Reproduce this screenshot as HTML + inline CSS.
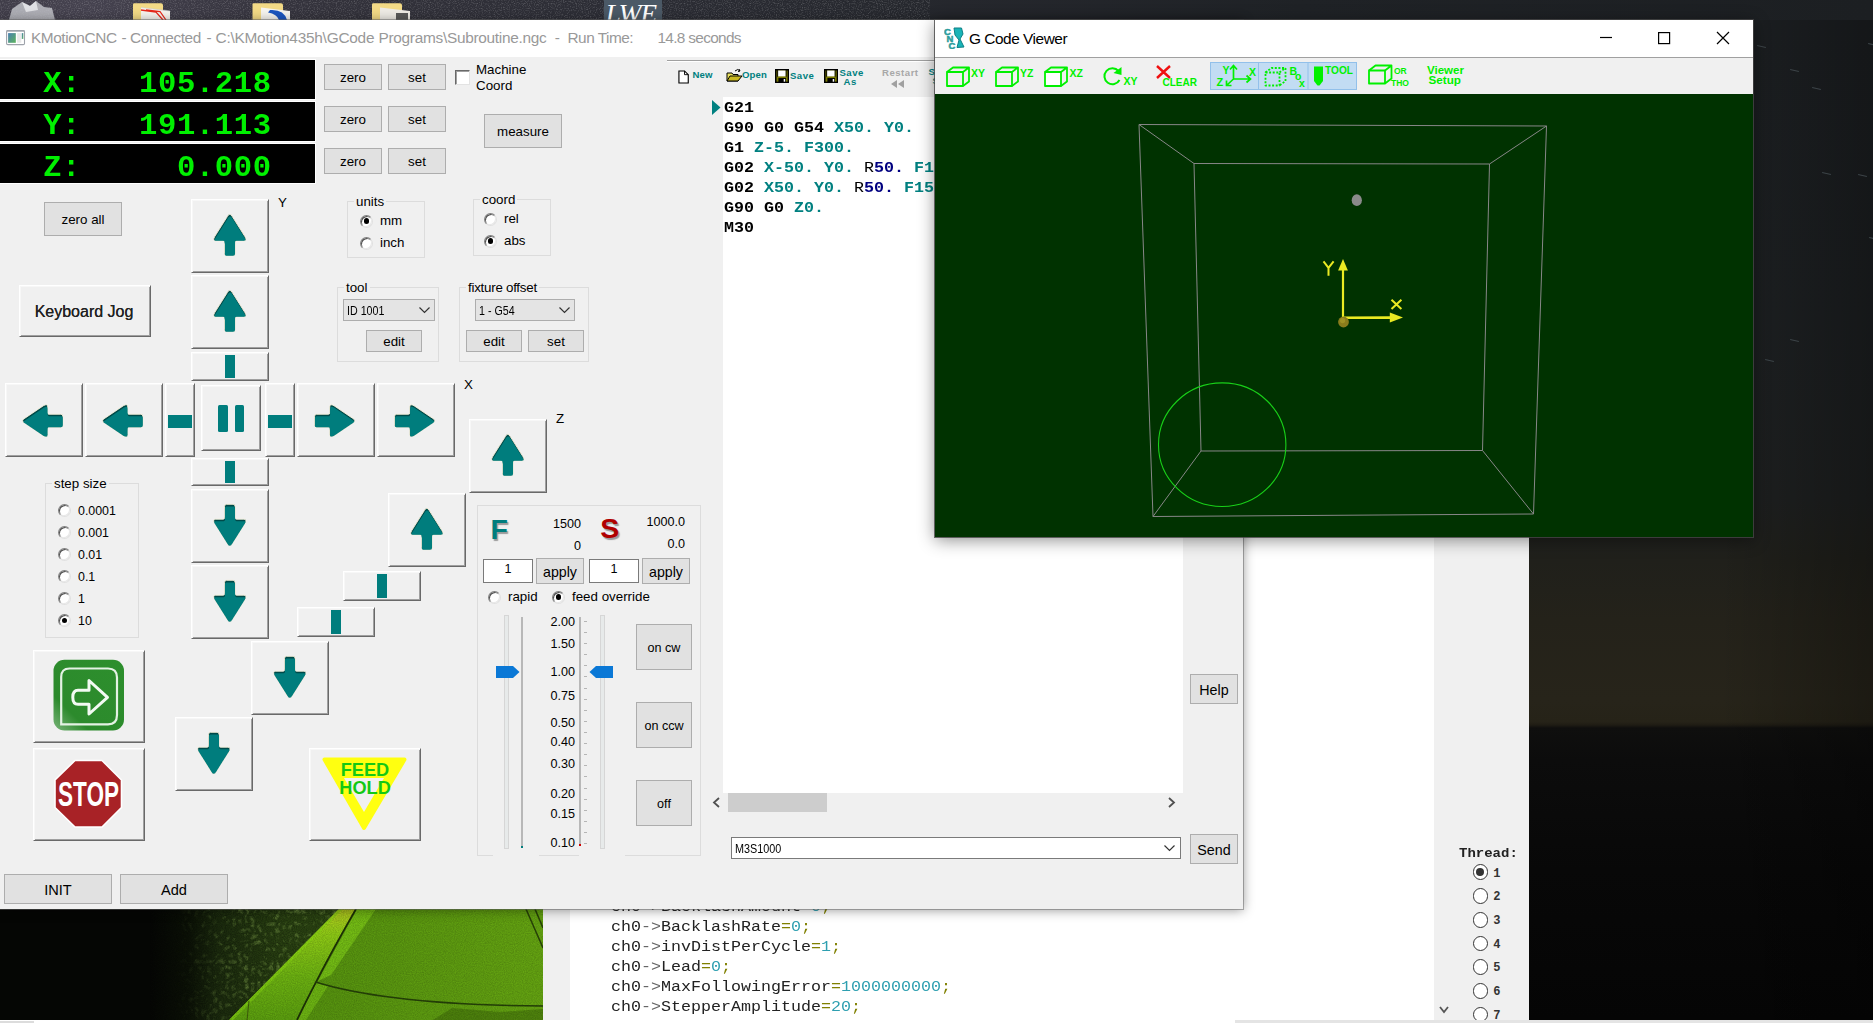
<!DOCTYPE html>
<html lang="en"><head><meta charset="utf-8"><title>KMotionCNC</title>
<style>
html,body{margin:0;padding:0}
body{width:1873px;height:1023px;overflow:hidden;position:relative;background:#15161a;font-family:"Liberation Sans",sans-serif;font-size:13.33px;color:#000}
.a{position:absolute}
.t{position:absolute;white-space:pre;line-height:1}
.btn{position:absolute;box-sizing:border-box;background:#e1e1e1;border:1px solid #adadad;text-align:center;white-space:pre}
.b3{position:absolute;box-sizing:border-box;background:#f0f0f0;border:1px solid;border-color:#fff #696969 #696969 #fff;box-shadow:inset 1px 1px 0 #f7f7f7,inset -1px -1px 0 #a0a0a0}
.gb{position:absolute;box-sizing:border-box;border:1px solid #dcdcdc}
.gl{position:absolute;background:#f0f0f0;padding:0 2px;white-space:pre;line-height:1}
.rd{position:absolute;box-sizing:border-box;width:13px;height:13px;border-radius:50%;background:#fff;border:1px solid;border-color:#808080 #e0e0e0 #e0e0e0 #808080;box-shadow:inset 1px 1px 0 #505050,inset -1px -1px 0 #e8e8e8}
.rd.on:after{content:"";position:absolute;left:2.7px;top:2.7px;width:5.8px;height:5.8px;border-radius:50%;background:#000}
.mono{font-family:"Liberation Mono",monospace}
.tl{color:#008080}
</style></head>
<body>
<!-- desktop -->
<div class="a" style="left:0px;top:0px;width:1873px;height:20px;background:linear-gradient(90deg,#403d49 0px,#45424f 90px,#3b3944 200px,#33323b 330px,#2c2d35 600px,#26282e 900px,#1f2226 1300px,#1c1f22 1873px)"></div>
<svg class="a" style="left:0;top:0" width="1873" height="20"><filter id="sp" x="0" y="0" width="100%" height="100%"><feTurbulence type="fractalNoise" baseFrequency="0.85" numOctaves="2" seed="7"/><feColorMatrix type="matrix" values="0 0 0 0 1  0 0 0 0 1  0 0 0 0 1  0 0 0 .9 -.42"/></filter><rect width="930" height="20" filter="url(#sp)" opacity=".55"/></svg>
<div class="a" style="left:1529px;top:20px;width:344px;height:1000px;background:linear-gradient(90deg,rgba(0,0,0,0) 55%,rgba(0,0,0,.28) 100%),linear-gradient(180deg,#1c1f22 0px,#1d2022 300px,#1e2020 480px,#20201b 540px,#24221a 600px,#27241a 680px,#262318 702px,#1f1c14 705px,#0f0f0e 708px,#0c0c0c 740px,#080808 850px,#050505 1000px)"></div>
<div class="a" style="left:1757px;top:46px;width:9px;height:1px;background:#3c4448;transform:rotate(14deg)"></div>
<div class="a" style="left:1790px;top:70px;width:9px;height:1px;background:#3c4448;transform:rotate(14deg)"></div>
<div class="a" style="left:1812px;top:88px;width:9px;height:1px;background:#3c4448;transform:rotate(14deg)"></div>
<div class="a" style="left:1822px;top:173px;width:9px;height:1px;background:#3c4448;transform:rotate(14deg)"></div>
<div class="a" style="left:1858px;top:175px;width:9px;height:1px;background:#3c4448;transform:rotate(14deg)"></div>
<div class="a" style="left:1869px;top:238px;width:9px;height:1px;background:#3c4448;transform:rotate(14deg)"></div>
<div class="a" style="left:1790px;top:340px;width:9px;height:1px;background:#3c4448;transform:rotate(14deg)"></div>
<div class="a" style="left:1765px;top:360px;width:9px;height:1px;background:#3c4448;transform:rotate(14deg)"></div>
<div class="a" style="left:1868px;top:44px;width:9px;height:1px;background:#3c4448;transform:rotate(14deg)"></div>
<svg class="a" style="left:0;top:0" width="700" height="20" viewBox="0 0 700 20">
<path d="M9 20 L12 9 L22 2 L30 6 L36 1 L44 7 L52 8 L55 20 Z" fill="#c4c6cc" opacity=".82"/>
<path d="M22 2 L30 6 L36 1 L38 10 L26 12 Z" fill="#e6e7ea" opacity=".9"/>
<g>
<path d="M133 20 V4.5 Q133 3.3 134.2 3.3 H161 Q163 3.3 163 5.3 V20 Z" fill="#f3da86"/>
<path d="M141 20 V7.5 L170 11 V20 Z" fill="#f7f5f0"/><path d="M141 7.5 L170 11" stroke="#d0d0d0" stroke-width=".6"/>
<path d="M141 10 L156 12 L163 20 M146 10 L160 11.5 L166 20" stroke="#e8281c" stroke-width="1.3" fill="none"/>
<path d="M252.5 20 V4.5 Q252.5 3.3 253.7 3.3 H281 Q283 3.3 283 5.3 V20 Z" fill="#f3da86"/>
<path d="M261 20 V7.5 L290 11 V20 Z" fill="#f7f5f0"/>
<path d="M270 10 Q284 9 287 20 L279 20 Q277 14 268 12.5 Z" fill="#1c56c0"/>
<path d="M372 20 V4.5 Q372 3.3 373.2 3.3 H400 Q402 3.3 402 5.3 V20 Z" fill="#f3da86"/>
<path d="M380 20 V7.5 L410 11 V20 Z" fill="#efece6"/>
<rect x="396" y="13" width="12" height="7" fill="#5a5a5a"/>
</g></svg>
<div class="a" style="left:603.5px;top:0px;width:58px;height:20px;background:#4b5966;overflow:hidden"><div class="t" style="left:2px;top:-2.4px;font:italic 27.5px 'Liberation Serif',serif;color:#fff;letter-spacing:-1.2px">LWE</div></div>
<svg class="a" style="left:0;top:909px" width="543" height="111" viewBox="0 0 543 111">
<defs>
<linearGradient id="gp" x1="0" y1="0" x2="1" y2="0"><stop offset="0" stop-color="#528e0e"/><stop offset=".45" stop-color="#5a9810"/><stop offset="1" stop-color="#66a612"/></linearGradient>
<linearGradient id="gc" x1="0" y1="0" x2="0" y2="1"><stop offset="0" stop-color="#b6cc20"/><stop offset=".22" stop-color="#90cc16"/><stop offset=".6" stop-color="#6eb412"/><stop offset="1" stop-color="#5ca00f"/></linearGradient>
<linearGradient id="gg" gradientUnits="userSpaceOnUse" x1="150" y1="0" x2="339" y2="0"><stop offset="0" stop-color="#050604"/><stop offset=".2" stop-color="#0b1106"/><stop offset=".36" stop-color="#1c2c0e"/><stop offset=".7" stop-color="#2a4212"/><stop offset="1" stop-color="#304c14"/></linearGradient>
<linearGradient id="fa" gradientUnits="userSpaceOnUse" x1="175" y1="0" x2="250" y2="0"><stop offset="0" stop-color="#000" stop-opacity="0"/><stop offset="1" stop-color="#000" stop-opacity="1"/></linearGradient>
<filter id="gr" x="0" y="0" width="100%" height="100%"><feTurbulence type="fractalNoise" baseFrequency="0.9" numOctaves="2" seed="3"/><feColorMatrix type="matrix" values="0 0 0 0 0  0 0 0 0 0  0 0 0 0 0  0 0 0 .55 -.12"/><feComposite in2="SourceGraphic" operator="in"/></filter>
<filter id="lf" x="0" y="0" width="100%" height="100%"><feTurbulence type="turbulence" baseFrequency="0.16" numOctaves="2" seed="11"/><feColorMatrix type="matrix" values="0 0 0 0 .30  0 0 0 0 .50  0 0 0 0 .10  0 1.5 0 0 -.42"/><feComposite in2="SourceGraphic" operator="in"/></filter>
</defs>
<rect width="543" height="111" fill="#050604"/>
<polygon points="150,0 339,0 229,111 150,111" fill="url(#gg)"/>
<polygon points="175,0 339,0 229,111 175,111" fill="url(#fa)" filter="url(#lf)" opacity=".75"/>
<polygon points="150,0 339,0 229,111 150,111" fill="#000" filter="url(#gr)"/>
<polygon points="339,0 543,0 543,111 229,111" fill="url(#gp)"/>
<polygon points="339,0 356.5,0 316.4,72.3 297,111 229,111" fill="url(#gc)"/>
<path d="M341 0 L231 111" stroke="#8cdc12" stroke-width="3" opacity=".55"/>
<polygon points="357,0 376,0 331,66 318,72" fill="#78c216" opacity=".9"/>
<polygon points="316,74 328,77 306,111 298,111" fill="#70b814" opacity=".9"/>
<path d="M356 0 Q333 40 316.4 72.3 Q304 96 297 111" stroke="#1e3406" stroke-width="1.8" fill="none"/>
<path d="M315.5 73 Q390 96 543 97" stroke="#264208" stroke-width="1.5" fill="none"/>
<path d="M526 0 L543 39 M535 0 L543 19" stroke="#2a4608" stroke-width="1.5" fill="none"/>
<path d="M247 111 L249 92" stroke="#3e5e0a" stroke-width="1"/>
<polygon points="433,111 452,99 500,103 543,100 543,111" fill="#3e6a0a" opacity=".55"/>
<polygon points="339,0 543,0 543,111 229,111" fill="#000" filter="url(#gr)" opacity=".5"/>
</svg>
<!-- background C program window -->
<div class="a" style="left:543px;top:537px;width:986px;height:483px;background:#f0f0f0"></div>
<div class="a" style="left:570px;top:537px;width:864px;height:483px;background:#fff"></div>
<div class="t mono" style="left:611px;top:899.3px;font-size:16.67px;color:#222;transform:scaleY(.87);transform-origin:0 76%">ch0-&gt;BacklashAmount<span style="color:#808000">=</span><span style="color:#2e9fb0">0</span><span style="color:#808000">;</span></div>
<div class="t mono" style="left:611px;top:919.3px;font-size:16.67px;color:#222;transform:scaleY(.87);transform-origin:0 76%">ch0<span style="color:#666">-&gt;</span>BacklashRate<span style="color:#808000">=</span><span style="color:#2e9fb0">0</span><span style="color:#808000">;</span></div>
<div class="t mono" style="left:611px;top:939.3px;font-size:16.67px;color:#222;transform:scaleY(.87);transform-origin:0 76%">ch0<span style="color:#666">-&gt;</span>invDistPerCycle<span style="color:#808000">=</span><span style="color:#2e9fb0">1</span><span style="color:#808000">;</span></div>
<div class="t mono" style="left:611px;top:959.3px;font-size:16.67px;color:#222;transform:scaleY(.87);transform-origin:0 76%">ch0<span style="color:#666">-&gt;</span>Lead<span style="color:#808000">=</span><span style="color:#2e9fb0">0</span><span style="color:#808000">;</span></div>
<div class="t mono" style="left:611px;top:979.3px;font-size:16.67px;color:#222;transform:scaleY(.87);transform-origin:0 76%">ch0<span style="color:#666">-&gt;</span>MaxFollowingError<span style="color:#808000">=</span><span style="color:#2e9fb0">1000000000</span><span style="color:#808000">;</span></div>
<div class="t mono" style="left:611px;top:999.3px;font-size:16.67px;color:#222;transform:scaleY(.87);transform-origin:0 76%">ch0<span style="color:#666">-&gt;</span>StepperAmplitude<span style="color:#808000">=</span><span style="color:#2e9fb0">20</span><span style="color:#808000">;</span></div>
<div class="t mono" style="left:1459px;top:846.2px;font-size:14px;font-weight:bold;color:#222;transform:scaleY(.87);transform-origin:0 76%">Thread:</div>
<div class="a" style="left:1472.6px;top:864.4px;width:15.8px;height:15.8px;box-sizing:border-box;border:1.4px solid #333;border-radius:50%;background:#fff"><div class="a" style="left:2.5px;top:2.5px;width:8px;height:8px;border-radius:50%;background:#333"></div></div>
<div class="t mono" style="left:1493.2px;top:867.5999999999999px;font-size:12px;font-weight:bold;color:#333">1</div>
<div class="a" style="left:1472.6px;top:888.1px;width:15.8px;height:15.8px;box-sizing:border-box;border:1.4px solid #333;border-radius:50%;background:#fff"></div>
<div class="t mono" style="left:1493.2px;top:891.3px;font-size:12px;font-weight:bold;color:#333">2</div>
<div class="a" style="left:1472.6px;top:911.8px;width:15.8px;height:15.8px;box-sizing:border-box;border:1.4px solid #333;border-radius:50%;background:#fff"></div>
<div class="t mono" style="left:1493.2px;top:914.9999999999999px;font-size:12px;font-weight:bold;color:#333">3</div>
<div class="a" style="left:1472.6px;top:935.5px;width:15.8px;height:15.8px;box-sizing:border-box;border:1.4px solid #333;border-radius:50%;background:#fff"></div>
<div class="t mono" style="left:1493.2px;top:938.6999999999999px;font-size:12px;font-weight:bold;color:#333">4</div>
<div class="a" style="left:1472.6px;top:959.2px;width:15.8px;height:15.8px;box-sizing:border-box;border:1.4px solid #333;border-radius:50%;background:#fff"></div>
<div class="t mono" style="left:1493.2px;top:962.3999999999999px;font-size:12px;font-weight:bold;color:#333">5</div>
<div class="a" style="left:1472.6px;top:982.9px;width:15.8px;height:15.8px;box-sizing:border-box;border:1.4px solid #333;border-radius:50%;background:#fff"></div>
<div class="t mono" style="left:1493.2px;top:986.0999999999999px;font-size:12px;font-weight:bold;color:#333">6</div>
<div class="a" style="left:1472.6px;top:1006.6px;width:15.8px;height:15.8px;box-sizing:border-box;border:1.4px solid #333;border-radius:50%;background:#fff"></div>
<div class="t mono" style="left:1493.2px;top:1009.8px;font-size:12px;font-weight:bold;color:#333">7</div>
<svg class="a" style="left:1438px;top:1005px" width="12" height="10"><path d="M2 2 L6 7 L10 2" stroke="#555" stroke-width="1.8" fill="none"/></svg>
<!-- KMotionCNC main window -->
<div class="a" style="left:0px;top:20px;width:1243px;height:889px;background:#f0f0f0;box-shadow:0 0 0 1px rgba(100,100,100,.5),0 1px 11px rgba(0,0,0,.42)"></div>
<div class="a" style="left:0px;top:20px;width:1243px;height:37px;background:#fff"></div>
<svg class="a" style="left:5px;top:29px" width="22" height="18" viewBox="5 29 22 18"><defs><linearGradient id="ai" x1="0" y1="0" x2="1" y2="1"><stop offset="0" stop-color="#4a7fb2"/><stop offset="1" stop-color="#5cb45c"/></linearGradient></defs>
<rect x="6.6" y="30.6" width="17.9" height="14" rx="1.2" fill="#fff" stroke="#9ea3ab" stroke-width="1.1"/><rect x="6.6" y="30.2" width="17.9" height="1.4" fill="#9ea3ab"/>
<rect x="8.1" y="33.1" width="7.7" height="9.7" fill="url(#ai)"/><rect x="17.1" y="33.1" width="4.2" height="9.7" fill="#e9e9e9"/><rect x="21.8" y="33.1" width="1.5" height="5.8" fill="url(#ai)"/></svg>
<svg class="a" style="left:0;top:24px" width="800" height="30" viewBox="0 24 800 30"><text x="31" y="43.3" font-family="Liberation Sans, sans-serif" font-size="15.4" fill="#999" textLength="86.0" lengthAdjust="spacing">KMotionCNC</text><text x="121.5" y="43.3" font-family="Liberation Sans, sans-serif" font-size="15.4" fill="#999" textLength="5.0" lengthAdjust="spacing">-</text><text x="130" y="43.3" font-family="Liberation Sans, sans-serif" font-size="15.4" fill="#999" textLength="71.3" lengthAdjust="spacing">Connected</text><text x="206.5" y="43.3" font-family="Liberation Sans, sans-serif" font-size="15.4" fill="#999" textLength="5.0" lengthAdjust="spacing">-</text><text x="215.5" y="43.3" font-family="Liberation Sans, sans-serif" font-size="15.4" fill="#999" textLength="159.0" lengthAdjust="spacing">C:\KMotion435h\GCode</text><text x="378.5" y="43.3" font-family="Liberation Sans, sans-serif" font-size="15.4" fill="#999" textLength="168.2" lengthAdjust="spacing">Programs\Subroutine.ngc</text><text x="554.7" y="43.3" font-family="Liberation Sans, sans-serif" font-size="15.4" fill="#999" textLength="5.0" lengthAdjust="spacing">-</text><text x="567.5" y="43.3" font-family="Liberation Sans, sans-serif" font-size="15.4" fill="#999" textLength="66.0" lengthAdjust="spacing">Run Time:</text><text x="657.5" y="43.3" font-family="Liberation Sans, sans-serif" font-size="15.4" fill="#999" textLength="84.0" lengthAdjust="spacing">14.8 seconds</text></svg>
<div class="a" style="left:0px;top:60px;width:315px;height:39px;background:#000;box-shadow:0 0 0 1px #fff"></div>
<div class="t mono" style="left:43.2px;top:69.3px;font-size:30.6px;font-weight:bold;letter-spacing:.5px;color:#00f000;transform:scaleY(.96);transform-origin:0 80%">X:</div>
<div class="t mono" style="left:100px;width:171.7px;text-align:right;top:69.3px;font-size:30.6px;font-weight:bold;letter-spacing:.6px;color:#00f000;transform:scaleY(.96);transform-origin:0 80%">105.218</div>
<div class="btn" style="left:324px;top:64px;width:58px;height:26px;line-height:26px;">zero</div>
<div class="btn" style="left:388px;top:64px;width:58px;height:26px;line-height:26px;">set</div>
<div class="a" style="left:0px;top:102px;width:315px;height:39px;background:#000;box-shadow:0 0 0 1px #fff"></div>
<div class="t mono" style="left:43.2px;top:111.3px;font-size:30.6px;font-weight:bold;letter-spacing:.5px;color:#00f000;transform:scaleY(.96);transform-origin:0 80%">Y:</div>
<div class="t mono" style="left:100px;width:171.7px;text-align:right;top:111.3px;font-size:30.6px;font-weight:bold;letter-spacing:.6px;color:#00f000;transform:scaleY(.96);transform-origin:0 80%">191.113</div>
<div class="btn" style="left:324px;top:106px;width:58px;height:26px;line-height:26px;">zero</div>
<div class="btn" style="left:388px;top:106px;width:58px;height:26px;line-height:26px;">set</div>
<div class="a" style="left:0px;top:144px;width:315px;height:39px;background:#000;box-shadow:0 0 0 1px #fff"></div>
<div class="t mono" style="left:43.2px;top:153.3px;font-size:30.6px;font-weight:bold;letter-spacing:.5px;color:#00f000;transform:scaleY(.96);transform-origin:0 80%">Z:</div>
<div class="t mono" style="left:100px;width:171.7px;text-align:right;top:153.3px;font-size:30.6px;font-weight:bold;letter-spacing:.6px;color:#00f000;transform:scaleY(.96);transform-origin:0 80%">0.000</div>
<div class="btn" style="left:324px;top:148px;width:58px;height:26px;line-height:26px;">zero</div>
<div class="btn" style="left:388px;top:148px;width:58px;height:26px;line-height:26px;">set</div>
<div class="a" style="left:455px;top:70px;width:15px;height:15px;background:#fff;box-sizing:border-box;border:1px solid;border-color:#696969 #e3e3e3 #e3e3e3 #696969;box-shadow:inset 1px 1px 0 #a0a0a0"></div>
<div class="t" style="left:476px;top:62.7px;font-size:13.33px">Machine</div>
<div class="t" style="left:476px;top:78.7px;font-size:13.33px">Coord</div>
<div class="btn" style="left:484px;top:114px;width:78px;height:34px;line-height:34px;">measure</div>
<div class="btn" style="left:44px;top:202px;width:78px;height:34px;line-height:34px;">zero all</div>
<div class="gb" style="left:347px;top:201px;width:78px;height:57px;"></div>
<div class="gl" style="left:354px;top:194.5px;font-size:13.33px">units</div>
<div class="rd on" style="left:360.0px;top:214.5px"></div>
<div class="t" style="left:380px;top:214px;">mm</div>
<div class="rd" style="left:360.0px;top:236.5px"></div>
<div class="t" style="left:380px;top:236px;">inch</div>
<div class="gb" style="left:473px;top:199px;width:78px;height:57px;"></div>
<div class="gl" style="left:480px;top:192.5px;font-size:13.33px">coord</div>
<div class="rd" style="left:484.0px;top:212.5px"></div>
<div class="t" style="left:504px;top:212px;">rel</div>
<div class="rd on" style="left:484.0px;top:234.5px"></div>
<div class="t" style="left:504px;top:234px;">abs</div>
<div class="gb" style="left:337px;top:287px;width:102px;height:74.5px;"></div>
<div class="gl" style="left:344px;top:280.5px;font-size:13.33px">tool</div>
<div class="gb" style="left:458.8px;top:287px;width:130.2px;height:74.5px;"></div>
<div class="gl" style="left:466px;top:280.5px;font-size:13.33px"><span style="letter-spacing:-.25px">fixture offset</span></div>
<div class="a" style="left:343px;top:299px;width:92px;height:22px;box-sizing:border-box;background:#e4e4e4;border:1px solid #adadad"><div class="t" style="left:3px;top:4.8px;font-size:12px;transform:scaleX(.89);transform-origin:0 50%">ID 1001</div><svg class="a" style="right:4px;top:7.0px" width="11" height="7"><path d="M0.5 0.5 L5.5 5.5 L10.5 0.5" stroke="#333" stroke-width="1.2" fill="none"/></svg></div>
<div class="btn" style="left:366px;top:330px;width:56px;height:22px;line-height:22px;">edit</div>
<div class="a" style="left:475px;top:299px;width:100px;height:22px;box-sizing:border-box;background:#e4e4e4;border:1px solid #adadad"><div class="t" style="left:3px;top:4.8px;font-size:12px;transform:scaleX(.89);transform-origin:0 50%">1 - G54</div><svg class="a" style="right:4px;top:7.0px" width="11" height="7"><path d="M0.5 0.5 L5.5 5.5 L10.5 0.5" stroke="#333" stroke-width="1.2" fill="none"/></svg></div>
<div class="btn" style="left:466px;top:330px;width:56px;height:22px;line-height:22px;">edit</div>
<div class="btn" style="left:528px;top:330px;width:56px;height:22px;line-height:22px;">set</div>
<div class="b3" style="left:191px;top:199px;width:78px;height:74px"><svg class="a" style="left:-1px;top:-1px" width="78" height="74" viewBox="0 0 78 74"><g transform="translate(38.8 36.0)"><clipPath id="ac1"><path d="M0 -20.70 Q1.3 -20.70 2.5 -18.40 L15.10 1.60 Q17.50 5.80 14.10 5.80 L6.55 5.80 Q5.25 5.80 5.25 7.20 L5.25 18.70 Q5.25 20.70 3.25 20.70 L-3.25 20.70 Q-5.25 20.70 -5.25 18.70 L-5.25 7.20 Q-5.25 5.80 -6.55 5.80 L-14.10 5.80 Q-17.50 5.80 -15.10 1.60 L-2.5 -18.40 Q-1.3 -20.70 0 -20.70 Z" transform="rotate(0)"/></clipPath><path d="M0 -20.70 Q1.3 -20.70 2.5 -18.40 L15.10 1.60 Q17.50 5.80 14.10 5.80 L6.55 5.80 Q5.25 5.80 5.25 7.20 L5.25 18.70 Q5.25 20.70 3.25 20.70 L-3.25 20.70 Q-5.25 20.70 -5.25 18.70 L-5.25 7.20 Q-5.25 5.80 -6.55 5.80 L-14.10 5.80 Q-17.50 5.80 -15.10 1.60 L-2.5 -18.40 Q-1.3 -20.70 0 -20.70 Z" transform="rotate(0)" fill="#004a4a" stroke="#f7efd8" stroke-width="0.9"/><g clip-path="url(#ac1)"><path d="M0 -20.70 Q1.3 -20.70 2.5 -18.40 L15.10 1.60 Q17.50 5.80 14.10 5.80 L6.55 5.80 Q5.25 5.80 5.25 7.20 L5.25 18.70 Q5.25 20.70 3.25 20.70 L-3.25 20.70 Q-5.25 20.70 -5.25 18.70 L-5.25 7.20 Q-5.25 5.80 -6.55 5.80 L-14.10 5.80 Q-17.50 5.80 -15.10 1.60 L-2.5 -18.40 Q-1.3 -20.70 0 -20.70 Z" transform="translate(0.3 2.1) rotate(0)" fill="#007d7d"/></g></g></svg></div>
<div class="b3" style="left:191px;top:275px;width:78px;height:74px"><svg class="a" style="left:-1px;top:-1px" width="78" height="74" viewBox="0 0 78 74"><g transform="translate(38.8 36.0)"><clipPath id="ac2"><path d="M0 -20.70 Q1.3 -20.70 2.5 -18.40 L15.10 1.60 Q17.50 5.80 14.10 5.80 L6.55 5.80 Q5.25 5.80 5.25 7.20 L5.25 18.70 Q5.25 20.70 3.25 20.70 L-3.25 20.70 Q-5.25 20.70 -5.25 18.70 L-5.25 7.20 Q-5.25 5.80 -6.55 5.80 L-14.10 5.80 Q-17.50 5.80 -15.10 1.60 L-2.5 -18.40 Q-1.3 -20.70 0 -20.70 Z" transform="rotate(0)"/></clipPath><path d="M0 -20.70 Q1.3 -20.70 2.5 -18.40 L15.10 1.60 Q17.50 5.80 14.10 5.80 L6.55 5.80 Q5.25 5.80 5.25 7.20 L5.25 18.70 Q5.25 20.70 3.25 20.70 L-3.25 20.70 Q-5.25 20.70 -5.25 18.70 L-5.25 7.20 Q-5.25 5.80 -6.55 5.80 L-14.10 5.80 Q-17.50 5.80 -15.10 1.60 L-2.5 -18.40 Q-1.3 -20.70 0 -20.70 Z" transform="rotate(0)" fill="#004a4a" stroke="#f7efd8" stroke-width="0.9"/><g clip-path="url(#ac2)"><path d="M0 -20.70 Q1.3 -20.70 2.5 -18.40 L15.10 1.60 Q17.50 5.80 14.10 5.80 L6.55 5.80 Q5.25 5.80 5.25 7.20 L5.25 18.70 Q5.25 20.70 3.25 20.70 L-3.25 20.70 Q-5.25 20.70 -5.25 18.70 L-5.25 7.20 Q-5.25 5.80 -6.55 5.80 L-14.10 5.80 Q-17.50 5.80 -15.10 1.60 L-2.5 -18.40 Q-1.3 -20.70 0 -20.70 Z" transform="translate(0.3 2.1) rotate(0)" fill="#007d7d"/></g></g></svg></div>
<div class="b3" style="left:191px;top:351.5px;width:78px;height:29px"><div class="a" style="left:33.0px;top:2px;width:10px;height:23px;background:#007d7d"></div></div>
<div class="b3" style="left:191px;top:458px;width:78px;height:28px"><div class="a" style="left:33.0px;top:2px;width:10px;height:22px;background:#007d7d"></div></div>
<div class="b3" style="left:191px;top:489px;width:78px;height:74px"><svg class="a" style="left:-1px;top:-1px" width="78" height="74" viewBox="0 0 78 74"><g transform="translate(38.8 36.0)"><clipPath id="ac3"><path d="M0 -20.70 Q1.3 -20.70 2.5 -18.40 L15.10 1.60 Q17.50 5.80 14.10 5.80 L6.55 5.80 Q5.25 5.80 5.25 7.20 L5.25 18.70 Q5.25 20.70 3.25 20.70 L-3.25 20.70 Q-5.25 20.70 -5.25 18.70 L-5.25 7.20 Q-5.25 5.80 -6.55 5.80 L-14.10 5.80 Q-17.50 5.80 -15.10 1.60 L-2.5 -18.40 Q-1.3 -20.70 0 -20.70 Z" transform="rotate(180)"/></clipPath><path d="M0 -20.70 Q1.3 -20.70 2.5 -18.40 L15.10 1.60 Q17.50 5.80 14.10 5.80 L6.55 5.80 Q5.25 5.80 5.25 7.20 L5.25 18.70 Q5.25 20.70 3.25 20.70 L-3.25 20.70 Q-5.25 20.70 -5.25 18.70 L-5.25 7.20 Q-5.25 5.80 -6.55 5.80 L-14.10 5.80 Q-17.50 5.80 -15.10 1.60 L-2.5 -18.40 Q-1.3 -20.70 0 -20.70 Z" transform="rotate(180)" fill="#004a4a" stroke="#f7efd8" stroke-width="0.9"/><g clip-path="url(#ac3)"><path d="M0 -20.70 Q1.3 -20.70 2.5 -18.40 L15.10 1.60 Q17.50 5.80 14.10 5.80 L6.55 5.80 Q5.25 5.80 5.25 7.20 L5.25 18.70 Q5.25 20.70 3.25 20.70 L-3.25 20.70 Q-5.25 20.70 -5.25 18.70 L-5.25 7.20 Q-5.25 5.80 -6.55 5.80 L-14.10 5.80 Q-17.50 5.80 -15.10 1.60 L-2.5 -18.40 Q-1.3 -20.70 0 -20.70 Z" transform="translate(0.3 2.1) rotate(180)" fill="#007d7d"/></g></g></svg></div>
<div class="b3" style="left:191px;top:565px;width:78px;height:74px"><svg class="a" style="left:-1px;top:-1px" width="78" height="74" viewBox="0 0 78 74"><g transform="translate(38.8 36.0)"><clipPath id="ac4"><path d="M0 -20.70 Q1.3 -20.70 2.5 -18.40 L15.10 1.60 Q17.50 5.80 14.10 5.80 L6.55 5.80 Q5.25 5.80 5.25 7.20 L5.25 18.70 Q5.25 20.70 3.25 20.70 L-3.25 20.70 Q-5.25 20.70 -5.25 18.70 L-5.25 7.20 Q-5.25 5.80 -6.55 5.80 L-14.10 5.80 Q-17.50 5.80 -15.10 1.60 L-2.5 -18.40 Q-1.3 -20.70 0 -20.70 Z" transform="rotate(180)"/></clipPath><path d="M0 -20.70 Q1.3 -20.70 2.5 -18.40 L15.10 1.60 Q17.50 5.80 14.10 5.80 L6.55 5.80 Q5.25 5.80 5.25 7.20 L5.25 18.70 Q5.25 20.70 3.25 20.70 L-3.25 20.70 Q-5.25 20.70 -5.25 18.70 L-5.25 7.20 Q-5.25 5.80 -6.55 5.80 L-14.10 5.80 Q-17.50 5.80 -15.10 1.60 L-2.5 -18.40 Q-1.3 -20.70 0 -20.70 Z" transform="rotate(180)" fill="#004a4a" stroke="#f7efd8" stroke-width="0.9"/><g clip-path="url(#ac4)"><path d="M0 -20.70 Q1.3 -20.70 2.5 -18.40 L15.10 1.60 Q17.50 5.80 14.10 5.80 L6.55 5.80 Q5.25 5.80 5.25 7.20 L5.25 18.70 Q5.25 20.70 3.25 20.70 L-3.25 20.70 Q-5.25 20.70 -5.25 18.70 L-5.25 7.20 Q-5.25 5.80 -6.55 5.80 L-14.10 5.80 Q-17.50 5.80 -15.10 1.60 L-2.5 -18.40 Q-1.3 -20.70 0 -20.70 Z" transform="translate(0.3 2.1) rotate(180)" fill="#007d7d"/></g></g></svg></div>
<div class="b3" style="left:5px;top:383px;width:78px;height:74px"><svg class="a" style="left:-1px;top:-1px" width="78" height="74" viewBox="0 0 78 74"><g transform="translate(37.7 37.7)"><clipPath id="ac5"><path d="M0 -20.10 Q1.3 -20.10 2.5 -17.80 L15.00 0.70 Q17.40 4.90 14.00 4.90 L7.75 4.90 Q6.45 4.90 6.45 6.30 L6.45 18.10 Q6.45 20.10 4.45 20.10 L-4.45 20.10 Q-6.45 20.10 -6.45 18.10 L-6.45 6.30 Q-6.45 4.90 -7.75 4.90 L-14.00 4.90 Q-17.40 4.90 -15.00 0.70 L-2.5 -17.80 Q-1.3 -20.10 0 -20.10 Z" transform="rotate(270)"/></clipPath><path d="M0 -20.10 Q1.3 -20.10 2.5 -17.80 L15.00 0.70 Q17.40 4.90 14.00 4.90 L7.75 4.90 Q6.45 4.90 6.45 6.30 L6.45 18.10 Q6.45 20.10 4.45 20.10 L-4.45 20.10 Q-6.45 20.10 -6.45 18.10 L-6.45 6.30 Q-6.45 4.90 -7.75 4.90 L-14.00 4.90 Q-17.40 4.90 -15.00 0.70 L-2.5 -17.80 Q-1.3 -20.10 0 -20.10 Z" transform="rotate(270)" fill="#004a4a" stroke="#f7efd8" stroke-width="0.9"/><g clip-path="url(#ac5)"><path d="M0 -20.10 Q1.3 -20.10 2.5 -17.80 L15.00 0.70 Q17.40 4.90 14.00 4.90 L7.75 4.90 Q6.45 4.90 6.45 6.30 L6.45 18.10 Q6.45 20.10 4.45 20.10 L-4.45 20.10 Q-6.45 20.10 -6.45 18.10 L-6.45 6.30 Q-6.45 4.90 -7.75 4.90 L-14.00 4.90 Q-17.40 4.90 -15.00 0.70 L-2.5 -17.80 Q-1.3 -20.10 0 -20.10 Z" transform="translate(0.3 2.1) rotate(270)" fill="#007d7d"/></g></g></svg></div>
<div class="b3" style="left:85px;top:383px;width:78px;height:74px"><svg class="a" style="left:-1px;top:-1px" width="78" height="74" viewBox="0 0 78 74"><g transform="translate(37.7 37.7)"><clipPath id="ac6"><path d="M0 -20.10 Q1.3 -20.10 2.5 -17.80 L15.00 0.70 Q17.40 4.90 14.00 4.90 L7.75 4.90 Q6.45 4.90 6.45 6.30 L6.45 18.10 Q6.45 20.10 4.45 20.10 L-4.45 20.10 Q-6.45 20.10 -6.45 18.10 L-6.45 6.30 Q-6.45 4.90 -7.75 4.90 L-14.00 4.90 Q-17.40 4.90 -15.00 0.70 L-2.5 -17.80 Q-1.3 -20.10 0 -20.10 Z" transform="rotate(270)"/></clipPath><path d="M0 -20.10 Q1.3 -20.10 2.5 -17.80 L15.00 0.70 Q17.40 4.90 14.00 4.90 L7.75 4.90 Q6.45 4.90 6.45 6.30 L6.45 18.10 Q6.45 20.10 4.45 20.10 L-4.45 20.10 Q-6.45 20.10 -6.45 18.10 L-6.45 6.30 Q-6.45 4.90 -7.75 4.90 L-14.00 4.90 Q-17.40 4.90 -15.00 0.70 L-2.5 -17.80 Q-1.3 -20.10 0 -20.10 Z" transform="rotate(270)" fill="#004a4a" stroke="#f7efd8" stroke-width="0.9"/><g clip-path="url(#ac6)"><path d="M0 -20.10 Q1.3 -20.10 2.5 -17.80 L15.00 0.70 Q17.40 4.90 14.00 4.90 L7.75 4.90 Q6.45 4.90 6.45 6.30 L6.45 18.10 Q6.45 20.10 4.45 20.10 L-4.45 20.10 Q-6.45 20.10 -6.45 18.10 L-6.45 6.30 Q-6.45 4.90 -7.75 4.90 L-14.00 4.90 Q-17.40 4.90 -15.00 0.70 L-2.5 -17.80 Q-1.3 -20.10 0 -20.10 Z" transform="translate(0.3 2.1) rotate(270)" fill="#007d7d"/></g></g></svg></div>
<div class="b3" style="left:165px;top:383px;width:30px;height:74px"><div class="a" style="left:2px;top:31.4px;width:24px;height:12.2px;background:#007d7d"></div></div>
<div class="b3" style="left:265px;top:383px;width:30px;height:74px"><div class="a" style="left:2px;top:31.4px;width:24px;height:12.2px;background:#007d7d"></div></div>
<div class="b3" style="left:297px;top:383px;width:78px;height:74px"><svg class="a" style="left:-1px;top:-1px" width="78" height="74" viewBox="0 0 78 74"><g transform="translate(37.7 37.7)"><clipPath id="ac7"><path d="M0 -20.10 Q1.3 -20.10 2.5 -17.80 L15.00 0.70 Q17.40 4.90 14.00 4.90 L7.75 4.90 Q6.45 4.90 6.45 6.30 L6.45 18.10 Q6.45 20.10 4.45 20.10 L-4.45 20.10 Q-6.45 20.10 -6.45 18.10 L-6.45 6.30 Q-6.45 4.90 -7.75 4.90 L-14.00 4.90 Q-17.40 4.90 -15.00 0.70 L-2.5 -17.80 Q-1.3 -20.10 0 -20.10 Z" transform="rotate(90)"/></clipPath><path d="M0 -20.10 Q1.3 -20.10 2.5 -17.80 L15.00 0.70 Q17.40 4.90 14.00 4.90 L7.75 4.90 Q6.45 4.90 6.45 6.30 L6.45 18.10 Q6.45 20.10 4.45 20.10 L-4.45 20.10 Q-6.45 20.10 -6.45 18.10 L-6.45 6.30 Q-6.45 4.90 -7.75 4.90 L-14.00 4.90 Q-17.40 4.90 -15.00 0.70 L-2.5 -17.80 Q-1.3 -20.10 0 -20.10 Z" transform="rotate(90)" fill="#004a4a" stroke="#f7efd8" stroke-width="0.9"/><g clip-path="url(#ac7)"><path d="M0 -20.10 Q1.3 -20.10 2.5 -17.80 L15.00 0.70 Q17.40 4.90 14.00 4.90 L7.75 4.90 Q6.45 4.90 6.45 6.30 L6.45 18.10 Q6.45 20.10 4.45 20.10 L-4.45 20.10 Q-6.45 20.10 -6.45 18.10 L-6.45 6.30 Q-6.45 4.90 -7.75 4.90 L-14.00 4.90 Q-17.40 4.90 -15.00 0.70 L-2.5 -17.80 Q-1.3 -20.10 0 -20.10 Z" transform="translate(0.3 2.1) rotate(90)" fill="#007d7d"/></g></g></svg></div>
<div class="b3" style="left:377px;top:383px;width:78px;height:74px"><svg class="a" style="left:-1px;top:-1px" width="78" height="74" viewBox="0 0 78 74"><g transform="translate(37.7 37.7)"><clipPath id="ac8"><path d="M0 -20.10 Q1.3 -20.10 2.5 -17.80 L15.00 0.70 Q17.40 4.90 14.00 4.90 L7.75 4.90 Q6.45 4.90 6.45 6.30 L6.45 18.10 Q6.45 20.10 4.45 20.10 L-4.45 20.10 Q-6.45 20.10 -6.45 18.10 L-6.45 6.30 Q-6.45 4.90 -7.75 4.90 L-14.00 4.90 Q-17.40 4.90 -15.00 0.70 L-2.5 -17.80 Q-1.3 -20.10 0 -20.10 Z" transform="rotate(90)"/></clipPath><path d="M0 -20.10 Q1.3 -20.10 2.5 -17.80 L15.00 0.70 Q17.40 4.90 14.00 4.90 L7.75 4.90 Q6.45 4.90 6.45 6.30 L6.45 18.10 Q6.45 20.10 4.45 20.10 L-4.45 20.10 Q-6.45 20.10 -6.45 18.10 L-6.45 6.30 Q-6.45 4.90 -7.75 4.90 L-14.00 4.90 Q-17.40 4.90 -15.00 0.70 L-2.5 -17.80 Q-1.3 -20.10 0 -20.10 Z" transform="rotate(90)" fill="#004a4a" stroke="#f7efd8" stroke-width="0.9"/><g clip-path="url(#ac8)"><path d="M0 -20.10 Q1.3 -20.10 2.5 -17.80 L15.00 0.70 Q17.40 4.90 14.00 4.90 L7.75 4.90 Q6.45 4.90 6.45 6.30 L6.45 18.10 Q6.45 20.10 4.45 20.10 L-4.45 20.10 Q-6.45 20.10 -6.45 18.10 L-6.45 6.30 Q-6.45 4.90 -7.75 4.90 L-14.00 4.90 Q-17.40 4.90 -15.00 0.70 L-2.5 -17.80 Q-1.3 -20.10 0 -20.10 Z" transform="translate(0.3 2.1) rotate(90)" fill="#007d7d"/></g></g></svg></div>
<div class="b3" style="left:201px;top:385px;width:60px;height:66px"><div class="a" style="left:16.3px;top:18.6px;width:9.4px;height:27.3px;background:#007d7d;border-radius:1.5px"></div><div class="a" style="left:32.5px;top:18.6px;width:9.4px;height:27.3px;background:#007d7d;border-radius:1.5px"></div></div>
<div class="b3" style="left:469px;top:419px;width:78px;height:74px"><svg class="a" style="left:-1px;top:-1px" width="78" height="74" viewBox="0 0 78 74"><g transform="translate(38.8 36.0)"><clipPath id="ac9"><path d="M0 -20.70 Q1.3 -20.70 2.5 -18.40 L15.10 1.60 Q17.50 5.80 14.10 5.80 L6.55 5.80 Q5.25 5.80 5.25 7.20 L5.25 18.70 Q5.25 20.70 3.25 20.70 L-3.25 20.70 Q-5.25 20.70 -5.25 18.70 L-5.25 7.20 Q-5.25 5.80 -6.55 5.80 L-14.10 5.80 Q-17.50 5.80 -15.10 1.60 L-2.5 -18.40 Q-1.3 -20.70 0 -20.70 Z" transform="rotate(0)"/></clipPath><path d="M0 -20.70 Q1.3 -20.70 2.5 -18.40 L15.10 1.60 Q17.50 5.80 14.10 5.80 L6.55 5.80 Q5.25 5.80 5.25 7.20 L5.25 18.70 Q5.25 20.70 3.25 20.70 L-3.25 20.70 Q-5.25 20.70 -5.25 18.70 L-5.25 7.20 Q-5.25 5.80 -6.55 5.80 L-14.10 5.80 Q-17.50 5.80 -15.10 1.60 L-2.5 -18.40 Q-1.3 -20.70 0 -20.70 Z" transform="rotate(0)" fill="#004a4a" stroke="#f7efd8" stroke-width="0.9"/><g clip-path="url(#ac9)"><path d="M0 -20.70 Q1.3 -20.70 2.5 -18.40 L15.10 1.60 Q17.50 5.80 14.10 5.80 L6.55 5.80 Q5.25 5.80 5.25 7.20 L5.25 18.70 Q5.25 20.70 3.25 20.70 L-3.25 20.70 Q-5.25 20.70 -5.25 18.70 L-5.25 7.20 Q-5.25 5.80 -6.55 5.80 L-14.10 5.80 Q-17.50 5.80 -15.10 1.60 L-2.5 -18.40 Q-1.3 -20.70 0 -20.70 Z" transform="translate(0.3 2.1) rotate(0)" fill="#007d7d"/></g></g></svg></div>
<div class="b3" style="left:387.5px;top:493px;width:78px;height:74px"><svg class="a" style="left:-1px;top:-1px" width="78" height="74" viewBox="0 0 78 74"><g transform="translate(38.8 36.0)"><clipPath id="ac10"><path d="M0 -20.70 Q1.3 -20.70 2.5 -18.40 L15.10 1.60 Q17.50 5.80 14.10 5.80 L6.55 5.80 Q5.25 5.80 5.25 7.20 L5.25 18.70 Q5.25 20.70 3.25 20.70 L-3.25 20.70 Q-5.25 20.70 -5.25 18.70 L-5.25 7.20 Q-5.25 5.80 -6.55 5.80 L-14.10 5.80 Q-17.50 5.80 -15.10 1.60 L-2.5 -18.40 Q-1.3 -20.70 0 -20.70 Z" transform="rotate(0)"/></clipPath><path d="M0 -20.70 Q1.3 -20.70 2.5 -18.40 L15.10 1.60 Q17.50 5.80 14.10 5.80 L6.55 5.80 Q5.25 5.80 5.25 7.20 L5.25 18.70 Q5.25 20.70 3.25 20.70 L-3.25 20.70 Q-5.25 20.70 -5.25 18.70 L-5.25 7.20 Q-5.25 5.80 -6.55 5.80 L-14.10 5.80 Q-17.50 5.80 -15.10 1.60 L-2.5 -18.40 Q-1.3 -20.70 0 -20.70 Z" transform="rotate(0)" fill="#004a4a" stroke="#f7efd8" stroke-width="0.9"/><g clip-path="url(#ac10)"><path d="M0 -20.70 Q1.3 -20.70 2.5 -18.40 L15.10 1.60 Q17.50 5.80 14.10 5.80 L6.55 5.80 Q5.25 5.80 5.25 7.20 L5.25 18.70 Q5.25 20.70 3.25 20.70 L-3.25 20.70 Q-5.25 20.70 -5.25 18.70 L-5.25 7.20 Q-5.25 5.80 -6.55 5.80 L-14.10 5.80 Q-17.50 5.80 -15.10 1.60 L-2.5 -18.40 Q-1.3 -20.70 0 -20.70 Z" transform="translate(0.3 2.1) rotate(0)" fill="#007d7d"/></g></g></svg></div>
<div class="b3" style="left:343px;top:571px;width:78px;height:30px"><div class="a" style="left:33.0px;top:2px;width:10px;height:24px;background:#007d7d"></div></div>
<div class="b3" style="left:297px;top:607px;width:78px;height:30px"><div class="a" style="left:33.0px;top:2px;width:10px;height:24px;background:#007d7d"></div></div>
<div class="b3" style="left:251px;top:641px;width:78px;height:74px"><svg class="a" style="left:-1px;top:-1px" width="78" height="74" viewBox="0 0 78 74"><g transform="translate(38.8 36.0)"><clipPath id="ac11"><path d="M0 -20.70 Q1.3 -20.70 2.5 -18.40 L15.10 1.60 Q17.50 5.80 14.10 5.80 L6.55 5.80 Q5.25 5.80 5.25 7.20 L5.25 18.70 Q5.25 20.70 3.25 20.70 L-3.25 20.70 Q-5.25 20.70 -5.25 18.70 L-5.25 7.20 Q-5.25 5.80 -6.55 5.80 L-14.10 5.80 Q-17.50 5.80 -15.10 1.60 L-2.5 -18.40 Q-1.3 -20.70 0 -20.70 Z" transform="rotate(180)"/></clipPath><path d="M0 -20.70 Q1.3 -20.70 2.5 -18.40 L15.10 1.60 Q17.50 5.80 14.10 5.80 L6.55 5.80 Q5.25 5.80 5.25 7.20 L5.25 18.70 Q5.25 20.70 3.25 20.70 L-3.25 20.70 Q-5.25 20.70 -5.25 18.70 L-5.25 7.20 Q-5.25 5.80 -6.55 5.80 L-14.10 5.80 Q-17.50 5.80 -15.10 1.60 L-2.5 -18.40 Q-1.3 -20.70 0 -20.70 Z" transform="rotate(180)" fill="#004a4a" stroke="#f7efd8" stroke-width="0.9"/><g clip-path="url(#ac11)"><path d="M0 -20.70 Q1.3 -20.70 2.5 -18.40 L15.10 1.60 Q17.50 5.80 14.10 5.80 L6.55 5.80 Q5.25 5.80 5.25 7.20 L5.25 18.70 Q5.25 20.70 3.25 20.70 L-3.25 20.70 Q-5.25 20.70 -5.25 18.70 L-5.25 7.20 Q-5.25 5.80 -6.55 5.80 L-14.10 5.80 Q-17.50 5.80 -15.10 1.60 L-2.5 -18.40 Q-1.3 -20.70 0 -20.70 Z" transform="translate(0.3 2.1) rotate(180)" fill="#007d7d"/></g></g></svg></div>
<div class="b3" style="left:175px;top:717px;width:78px;height:74px"><svg class="a" style="left:-1px;top:-1px" width="78" height="74" viewBox="0 0 78 74"><g transform="translate(38.8 36.0)"><clipPath id="ac12"><path d="M0 -20.70 Q1.3 -20.70 2.5 -18.40 L15.10 1.60 Q17.50 5.80 14.10 5.80 L6.55 5.80 Q5.25 5.80 5.25 7.20 L5.25 18.70 Q5.25 20.70 3.25 20.70 L-3.25 20.70 Q-5.25 20.70 -5.25 18.70 L-5.25 7.20 Q-5.25 5.80 -6.55 5.80 L-14.10 5.80 Q-17.50 5.80 -15.10 1.60 L-2.5 -18.40 Q-1.3 -20.70 0 -20.70 Z" transform="rotate(180)"/></clipPath><path d="M0 -20.70 Q1.3 -20.70 2.5 -18.40 L15.10 1.60 Q17.50 5.80 14.10 5.80 L6.55 5.80 Q5.25 5.80 5.25 7.20 L5.25 18.70 Q5.25 20.70 3.25 20.70 L-3.25 20.70 Q-5.25 20.70 -5.25 18.70 L-5.25 7.20 Q-5.25 5.80 -6.55 5.80 L-14.10 5.80 Q-17.50 5.80 -15.10 1.60 L-2.5 -18.40 Q-1.3 -20.70 0 -20.70 Z" transform="rotate(180)" fill="#004a4a" stroke="#f7efd8" stroke-width="0.9"/><g clip-path="url(#ac12)"><path d="M0 -20.70 Q1.3 -20.70 2.5 -18.40 L15.10 1.60 Q17.50 5.80 14.10 5.80 L6.55 5.80 Q5.25 5.80 5.25 7.20 L5.25 18.70 Q5.25 20.70 3.25 20.70 L-3.25 20.70 Q-5.25 20.70 -5.25 18.70 L-5.25 7.20 Q-5.25 5.80 -6.55 5.80 L-14.10 5.80 Q-17.50 5.80 -15.10 1.60 L-2.5 -18.40 Q-1.3 -20.70 0 -20.70 Z" transform="translate(0.3 2.1) rotate(180)" fill="#007d7d"/></g></g></svg></div>
<div class="t" style="left:278px;top:196px;font-size:13.33px">Y</div>
<div class="t" style="left:464px;top:378px;font-size:13.33px">X</div>
<div class="t" style="left:556px;top:412px;font-size:13.33px">Z</div>
<div class="b3" style="left:19px;top:285px;width:132px;height:52px"><div class="t" style="left:-1px;width:130px;text-align:center;top:18px;font-size:16px;color:#222;text-shadow:0 0 .6px #222">Keyboard Jog</div></div>
<div class="gb" style="left:45px;top:483px;width:94px;height:155px;"></div>
<div class="gl" style="left:52px;top:476.5px;font-size:13.33px">step size</div>
<div class="rd" style="left:58.0px;top:504.0px"></div>
<div class="t" style="left:78px;top:504.5px;font-size:12.4px">0.0001</div>
<div class="rd" style="left:58.0px;top:526.0px"></div>
<div class="t" style="left:78px;top:526.5px;font-size:12.4px">0.001</div>
<div class="rd" style="left:58.0px;top:548.0px"></div>
<div class="t" style="left:78px;top:548.5px;font-size:12.4px">0.01</div>
<div class="rd" style="left:58.0px;top:570.0px"></div>
<div class="t" style="left:78px;top:570.5px;font-size:12.4px">0.1</div>
<div class="rd" style="left:58.0px;top:592.0px"></div>
<div class="t" style="left:78px;top:592.5px;font-size:12.4px">1</div>
<div class="rd on" style="left:58.0px;top:614.0px"></div>
<div class="t" style="left:78px;top:614.5px;font-size:12.4px">10</div>
<div class="b3" style="left:33px;top:649.5px;width:112px;height:93px"></div>
<svg class="a" style="left:53px;top:659px" width="72" height="72" viewBox="53 659 72 72">
<defs><linearGradient id="cs" x1="1" y1="0" x2="0" y2="1"><stop offset="0" stop-color="#2d8f2d"/><stop offset=".75" stop-color="#2c8a2c"/><stop offset="1" stop-color="#79b379"/></linearGradient></defs>
<rect x="53.5" y="659.7" width="70.5" height="70.7" rx="11" fill="url(#cs)"/>
<path d="M61.2 724.3 V677 Q61.2 668.5 69.5 668.5 H108 Q117 668.5 117 677.5 V715 Q117 724.3 108 724.3 Z" fill="none" stroke="#e4f2e4" stroke-width="2.2"/>
<path d="M89 680.5 L107.5 697.3 L89 714 V704.3 H78 Q72.8 704.3 72.8 697.3 Q72.8 690.3 78 690.3 H89 Z" fill="none" stroke="#f2faf2" stroke-width="3" stroke-linejoin="round"/>
</svg>
<div class="b3" style="left:33px;top:747.5px;width:112px;height:93px"></div>
<svg class="a" style="left:52px;top:757px" width="74" height="74" viewBox="52 757 74 74">
<polygon points="75,760.5 102,760.5 121.5,780 121.5,807.5 102,827 75,827 55,807.5 55,780" fill="#a82226" stroke="#fff" stroke-width="1.6"/>
<text x="88.5" y="805.8" text-anchor="middle" font-family="Liberation Sans, sans-serif" font-weight="bold" font-size="34.5" textLength="61" lengthAdjust="spacingAndGlyphs" fill="#fff">STOP</text>
</svg>
<div class="b3" style="left:309px;top:747.5px;width:112px;height:93px"></div>
<svg class="a" style="left:315px;top:752px" width="100" height="84" viewBox="315 752 100 84">
<polygon points="324.5,759.5 404.5,759.5 364,828" fill="#ffff10" stroke="#ffff10" stroke-width="4" stroke-linejoin="round"/>
<polygon points="344,778 384,778 364,812" fill="#f0f0f0"/>
<text x="364.9" y="775.7" text-anchor="middle" font-family="Liberation Sans, sans-serif" font-weight="bold" font-size="18.2" fill="#14c814">FEED</text>
<text x="365.1" y="793.9" text-anchor="middle" font-family="Liberation Sans, sans-serif" font-weight="bold" font-size="18.2" fill="#14c814">HOLD</text>
</svg>
<div class="btn" style="left:4px;top:874px;width:108px;height:30px;line-height:30px;font-size:14.6px">INIT</div>
<div class="btn" style="left:120px;top:874px;width:108px;height:30px;line-height:30px;font-size:14.6px">Add</div>
<div class="gb" style="left:477px;top:505px;width:224px;height:351px;"></div>
<div class="a" style="left:493px;top:854px;width:46px;height:3px;background:#f0f0f0"></div>
<div class="a" style="left:579px;top:854px;width:46px;height:3px;background:#f0f0f0"></div>
<div class="t" style="left:490.5px;top:514.5px;font-size:28.5px;font-weight:bold;color:#007d7d;text-shadow:1.5px 1.5px 1px #9a9a9a">F</div>
<div class="t" style="left:600.3px;top:514px;font-size:28.5px;font-weight:bold;color:#b00000;text-shadow:1.5px 1.5px 1px #9a9a9a">S</div>
<div class="t" style="left:481px;width:100px;text-align:right;top:518.2px;font-size:12.6px">1500</div>
<div class="t" style="left:481px;width:100px;text-align:right;top:539.7px;font-size:12.6px">0</div>
<div class="t" style="left:585px;width:100px;text-align:right;top:515.7px;font-size:12.6px">1000.0</div>
<div class="t" style="left:585px;width:100px;text-align:right;top:537.7px;font-size:12.6px">0.0</div>
<div class="a" style="left:483px;top:559px;width:50px;height:24px;box-sizing:border-box;background:#fff;border:1px solid #7a7a7a;text-align:center;line-height:18px;font-size:12.6px">1</div>
<div class="btn" style="left:536px;top:558px;width:48px;height:26px;line-height:26px;font-size:14.2px">apply</div>
<div class="a" style="left:589px;top:559px;width:50px;height:24px;box-sizing:border-box;background:#fff;border:1px solid #7a7a7a;text-align:center;line-height:18px;font-size:12.6px">1</div>
<div class="btn" style="left:642px;top:558px;width:48px;height:26px;line-height:26px;font-size:14.2px">apply</div>
<div class="rd" style="left:488.0px;top:590.5px"></div>
<div class="t" style="left:508px;top:590px;">rapid</div>
<div class="rd on" style="left:552.0px;top:590.5px"></div>
<div class="t" style="left:572px;top:590px;">feed override</div>
<div class="a" style="left:504px;top:615px;width:5px;height:234px;background:#e7eaea;border:1px solid #d6d6d6;box-sizing:border-box"></div>
<div class="a" style="left:521px;top:617px;width:2px;height:229px;background:#b8b8b8"></div>
<div class="a" style="left:579px;top:617px;width:2px;height:229px;background:#b8b8b8"></div>
<div class="a" style="left:600px;top:615px;width:5px;height:234px;background:#e7eaea;border:1px solid #d6d6d6;box-sizing:border-box"></div>
<svg class="a" style="left:496px;top:666px" width="24" height="12"><polygon points="0,0 17,0 23.5,6 17,12 0,12" fill="#0a78d6"/></svg>
<svg class="a" style="left:589px;top:666px" width="24" height="12"><polygon points="24,0 7,0 0.5,6 7,12 24,12" fill="#0a78d6"/></svg>
<div class="t" style="left:475px;width:100px;text-align:right;top:615.5px;font-size:12.6px">2.00</div>
<div class="t" style="left:475px;width:100px;text-align:right;top:638.0px;font-size:12.6px">1.50</div>
<div class="t" style="left:475px;width:100px;text-align:right;top:665.9px;font-size:12.6px">1.00</div>
<div class="t" style="left:475px;width:100px;text-align:right;top:689.7px;font-size:12.6px">0.75</div>
<div class="t" style="left:475px;width:100px;text-align:right;top:717.2px;font-size:12.6px">0.50</div>
<div class="t" style="left:475px;width:100px;text-align:right;top:736.2px;font-size:12.6px">0.40</div>
<div class="t" style="left:475px;width:100px;text-align:right;top:758.1px;font-size:12.6px">0.30</div>
<div class="t" style="left:475px;width:100px;text-align:right;top:788.0px;font-size:12.6px">0.20</div>
<div class="t" style="left:475px;width:100px;text-align:right;top:807.5px;font-size:12.6px">0.15</div>
<div class="t" style="left:475px;width:100px;text-align:right;top:837.4px;font-size:12.6px">0.10</div>
<div class="a" style="left:584px;top:621px;width:3px;height:1px;background:#b5b5b5"></div>
<div class="a" style="left:584px;top:632px;width:3px;height:1px;background:#b5b5b5"></div>
<div class="a" style="left:584px;top:643px;width:3px;height:1px;background:#b5b5b5"></div>
<div class="a" style="left:584px;top:654px;width:3px;height:1px;background:#b5b5b5"></div>
<div class="a" style="left:584px;top:665px;width:3px;height:1px;background:#b5b5b5"></div>
<div class="a" style="left:584px;top:676px;width:3px;height:1px;background:#b5b5b5"></div>
<div class="a" style="left:584px;top:688px;width:3px;height:1px;background:#b5b5b5"></div>
<div class="a" style="left:584px;top:699px;width:3px;height:1px;background:#b5b5b5"></div>
<div class="a" style="left:584px;top:710px;width:3px;height:1px;background:#b5b5b5"></div>
<div class="a" style="left:584px;top:721px;width:3px;height:1px;background:#b5b5b5"></div>
<div class="a" style="left:584px;top:732px;width:3px;height:1px;background:#b5b5b5"></div>
<div class="a" style="left:584px;top:743px;width:3px;height:1px;background:#b5b5b5"></div>
<div class="a" style="left:584px;top:754px;width:3px;height:1px;background:#b5b5b5"></div>
<div class="a" style="left:584px;top:765px;width:3px;height:1px;background:#b5b5b5"></div>
<div class="a" style="left:584px;top:776px;width:3px;height:1px;background:#b5b5b5"></div>
<div class="a" style="left:584px;top:788px;width:3px;height:1px;background:#b5b5b5"></div>
<div class="a" style="left:584px;top:799px;width:3px;height:1px;background:#b5b5b5"></div>
<div class="a" style="left:584px;top:810px;width:3px;height:1px;background:#b5b5b5"></div>
<div class="a" style="left:584px;top:821px;width:3px;height:1px;background:#b5b5b5"></div>
<div class="a" style="left:584px;top:832px;width:3px;height:1px;background:#b5b5b5"></div>
<div class="a" style="left:584px;top:843px;width:3px;height:1px;background:#b5b5b5"></div>
<div class="a" style="left:579px;top:844px;width:2px;height:2px;background:#d00000"></div>
<div class="a" style="left:521px;top:846px;width:2px;height:2px;background:#007d7d"></div>
<div class="btn" style="left:636px;top:624px;width:56px;height:46px;line-height:46px;font-size:12.6px">on cw</div>
<div class="btn" style="left:636px;top:702px;width:56px;height:46px;line-height:46px;font-size:12.6px">on ccw</div>
<div class="btn" style="left:636px;top:780px;width:56px;height:46px;line-height:46px;font-size:12.6px">off</div>
<div class="a" style="left:667px;top:60px;width:576px;height:1px;background:#a0a0a0"></div>
<div class="a" style="left:667px;top:61px;width:576px;height:1px;background:#fff"></div>
<div class="a" style="left:723px;top:97px;width:460px;height:696px;background:#fff"></div>
<svg class="a" style="left:712px;top:100px" width="9" height="15"><polygon points="0,0 8.5,7.5 0,15" fill="#008080"/></svg>
<div class="t mono" style="left:724px;top:98.8px;font-size:16.67px;line-height:18px;transform:scaleY(.84);transform-origin:0 76%"><b>G21</b></div>
<div class="t mono" style="left:724px;top:118.8px;font-size:16.67px;line-height:18px;transform:scaleY(.84);transform-origin:0 76%"><b>G90 G0 G54 <span class="tl">X50. Y0.</span></b></div>
<div class="t mono" style="left:724px;top:138.8px;font-size:16.67px;line-height:18px;transform:scaleY(.84);transform-origin:0 76%"><b>G1 <span class="tl">Z-5. F300.</span></b></div>
<div class="t mono" style="left:724px;top:158.8px;font-size:16.67px;line-height:18px;transform:scaleY(.84);transform-origin:0 76%"><b>G02 <span class="tl">X-50. Y0.</span> </b>R<b style="color:#000080">50.</b><b class="tl"> F1500.</b></div>
<div class="t mono" style="left:724px;top:178.8px;font-size:16.67px;line-height:18px;transform:scaleY(.84);transform-origin:0 76%"><b>G02 <span class="tl">X50. Y0.</span> </b>R<b style="color:#000080">50.</b><b class="tl"> F1500.</b></div>
<div class="t mono" style="left:724px;top:198.8px;font-size:16.67px;line-height:18px;transform:scaleY(.84);transform-origin:0 76%"><b>G90 G0 <span class="tl">Z0.</span></b></div>
<div class="t mono" style="left:724px;top:218.8px;font-size:16.67px;line-height:18px;transform:scaleY(.84);transform-origin:0 76%"><b>M30</b></div>
<svg class="a" style="left:678px;top:69.5px" width="11.2" height="14" viewBox="0 0 12 15"><path d="M1 1 H7 L11 5 V14 H1 Z" fill="#fff" stroke="#000" stroke-width="1.2"/><path d="M7 1 V5 H11" fill="none" stroke="#000" stroke-width="1"/></svg>
<div class="t" style="left:692.5px;top:70px;font-size:9.6px;font-weight:bold;color:#008080;letter-spacing:0.1px">New</div>
<svg class="a" style="left:726px;top:68px" width="17" height="15"><path d="M1 5 H6 L7 6.5 H12 V13 H1 Z" fill="#e8e060" stroke="#000" stroke-width="1"/><path d="M1 13 L4 8 H16 L12 13 Z" fill="#c8b820" stroke="#000" stroke-width="1"/><path d="M9 3 Q12 0 14 3 L13 1 M14 3 L12 3.5" stroke="#000" stroke-width="1" fill="none"/></svg>
<div class="t" style="left:742px;top:70px;font-size:9.6px;font-weight:bold;color:#008080;letter-spacing:0.1px">Open</div>
<svg class="a" style="left:774.5px;top:68.5px" width="14.2" height="14.2" viewBox="0 0 15 15"><rect x="0.8" y="0.8" width="13.4" height="13.4" fill="#7a7a00" stroke="#000" stroke-width="1.6"/><rect x="3.2" y="1.6" width="8.2" height="6.2" fill="#fff"/><rect x="2.4" y="1.2" width=".9" height="7" fill="#000"/><rect x="11.3" y="1.2" width=".9" height="7" fill="#000"/><rect x="3.6" y="9.6" width="8" height="4.6" fill="#000"/><rect x="9.2" y="10.6" width="1.6" height="2.8" fill="#fff"/></svg>
<div class="t" style="left:790px;top:71px;font-size:9.6px;font-weight:bold;color:#008080;letter-spacing:0.45px">Save</div>
<svg class="a" style="left:823.5px;top:68.5px" width="14.2" height="14.2" viewBox="0 0 15 15"><rect x="0.8" y="0.8" width="13.4" height="13.4" fill="#7a7a00" stroke="#000" stroke-width="1.6"/><rect x="3.2" y="1.6" width="8.2" height="6.2" fill="#fff"/><rect x="2.4" y="1.2" width=".9" height="7" fill="#000"/><rect x="11.3" y="1.2" width=".9" height="7" fill="#000"/><rect x="3.6" y="9.6" width="8" height="4.6" fill="#000"/><rect x="9.2" y="10.6" width="1.6" height="2.8" fill="#fff"/></svg>
<div class="t" style="left:839.5px;top:68px;font-size:9.6px;font-weight:bold;color:#008080;letter-spacing:0.45px">Save</div>
<div class="t" style="left:843.5px;top:76.5px;font-size:9.6px;font-weight:bold;color:#008080;letter-spacing:0.5px">As</div>
<div class="t" style="left:882px;top:68px;font-size:9.6px;font-weight:bold;color:#a8a8a8;letter-spacing:0.5px">Restart</div>
<svg class="a" style="left:891px;top:80px" width="14" height="9"><polygon points="6,0 6,8 0,4" fill="#a0a0a0"/><polygon points="13,0 13,8 7,4" fill="#a0a0a0"/></svg>
<div class="t" style="left:928.5px;top:66.5px;font-size:9.6px;font-weight:bold;color:#008080;letter-spacing:0.1px">Single</div>
<div class="t" style="left:932.5px;top:76px;font-size:9.6px;font-weight:bold;color:#008080;letter-spacing:0.1px">Step</div>
<div class="a" style="left:710px;top:793px;width:473px;height:19px;background:#f0f0f0"></div>
<div class="a" style="left:728px;top:793px;width:99px;height:19px;background:#cdcdcd"></div>
<svg class="a" style="left:712px;top:797px" width="9" height="11"><path d="M7 1 L2 5.5 L7 10" stroke="#505050" stroke-width="1.8" fill="none"/></svg>
<svg class="a" style="left:1167px;top:797px" width="9" height="11"><path d="M2 1 L7 5.5 L2 10" stroke="#505050" stroke-width="1.8" fill="none"/></svg>
<div class="a" style="left:731px;top:837px;width:450px;height:22px;box-sizing:border-box;background:#fff;border:1px solid #7a7a7a"><div class="t" style="left:3px;top:5px;font-size:12px;transform:scaleX(.9);transform-origin:0 50%">M3S1000</div><svg class="a" style="right:5px;top:7px" width="11" height="7"><path d="M0.5 0.5 L5.5 5.5 L10.5 0.5" stroke="#333" stroke-width="1.2" fill="none"/></svg></div>
<div class="btn" style="left:1190px;top:834px;width:48px;height:30px;line-height:30px;font-size:14.3px">Send</div>
<div class="btn" style="left:1190px;top:674px;width:48px;height:30px;line-height:30px;font-size:14.3px">Help</div>
<!-- G Code Viewer -->
<div class="a" style="left:935px;top:20px;width:818px;height:517px;background:#003200;box-shadow:0 0 0 1px rgba(70,70,70,.8),0 3px 16px rgba(0,0,0,.45)"></div>
<div class="a" style="left:935px;top:20px;width:818px;height:37px;background:#fff"></div>
<div class="a" style="left:935px;top:58px;width:818px;height:36px;background:#f0f0f0"></div>
<div class="a" style="left:935px;top:57px;width:818px;height:1px;background:#a0a0a0"></div>
<svg class="a" style="left:944px;top:27px" width="21" height="22" viewBox="0 0 21 22">
<text x="0" y="8" font-family="Liberation Sans, sans-serif" font-weight="bold" font-size="9.5" fill="#2a9c9c" stroke="#2a9c9c" stroke-width=".5">C</text>
<text x="2.5" y="14.5" font-family="Liberation Sans, sans-serif" font-weight="bold" font-size="9.5" fill="#2a9c9c" stroke="#2a9c9c" stroke-width=".5">N</text>
<text x="4.5" y="21.5" font-family="Liberation Sans, sans-serif" font-weight="bold" font-size="9.5" fill="#2a9c9c" stroke="#2a9c9c" stroke-width=".5">C</text>
<path d="M10 1 L17.5 1 L19 7 L16 12 L20 20 L13 20.5 L15 13 L11 8 Z" fill="#18b4b8" stroke="#0d7f84" stroke-width="1"/>
</svg>
<div class="t" style="left:969px;top:31px;font-size:15.4px;letter-spacing:-0.46px">G Code Viewer</div>
<svg class="a" style="left:1596px;top:28px" width="140" height="20" viewBox="1596 28 140 20">
<path d="M1600 37.5 H1612" stroke="#000" stroke-width="1.2"/>
<rect x="1658.6" y="32.6" width="11" height="11" fill="none" stroke="#000" stroke-width="1.2"/>
<path d="M1717 32 L1729 44 M1729 32 L1717 44" stroke="#000" stroke-width="1.2"/>
</svg>
<svg class="a" style="left:935px;top:58px" width="818" height="36" viewBox="935 58 818 36"><rect x="1210.5" y="62.5" width="146" height="27" fill="#c2dcf3" stroke="#92c0ea"/><path d="M1258.5 62.5 V89.5 M1308 62.5 V89.5" stroke="#92c0ea"/><g fill="none" stroke="#00f000" stroke-width="1.8" stroke-linejoin="round"><rect x="947" y="72" width="16" height="14" fill="none"/><path d="M947 72 L953 67.5 H969 V81.5 L963 86 M963 72 L969 67.5"/></g><text x="971" y="77.3" font-family="Liberation Sans, sans-serif" font-weight="bold" font-size="10.5" fill="#00f000" >XY</text><g fill="none" stroke="#00f000" stroke-width="1.8" stroke-linejoin="round"><rect x="996" y="72" width="16" height="14" fill="none"/><path d="M996 72 L1002 67.5 H1018 V81.5 L1012 86 M1012 72 L1018 67.5"/></g><text x="1020" y="77.3" font-family="Liberation Sans, sans-serif" font-weight="bold" font-size="10.5" fill="#00f000" >YZ</text><g fill="none" stroke="#00f000" stroke-width="1.8" stroke-linejoin="round"><rect x="1045" y="72" width="16" height="14" fill="#fff"/><path d="M1045 72 L1051 67.5 H1067 V81.5 L1061 86 M1061 72 L1067 67.5"/></g><text x="1069.5" y="77.3" font-family="Liberation Sans, sans-serif" font-weight="bold" font-size="10.5" fill="#00f000" >XZ</text><path d="M1118.5 71 A8 8 0 1 0 1119.5 80" fill="none" stroke="#00f000" stroke-width="2"/><polygon points="1113.5,73 1121.5,67 1121.5,75" fill="#00f000"/><text x="1123.5" y="84.8" font-family="Liberation Sans, sans-serif" font-weight="bold" font-size="10.5" fill="#00f000" >XY</text><path d="M1157 66 L1170 78 M1170 66 L1157 78" stroke="#f01010" stroke-width="2.4"/><text x="1162.5" y="86.2" font-family="Liberation Sans, sans-serif" font-weight="bold" font-size="10.5" fill="#00f000" textLength="34.5" lengthAdjust="spacingAndGlyphs">CLEAR</text><text x="1222.5" y="73.5" font-family="Liberation Sans, sans-serif" font-weight="bold" font-size="10.5" fill="#00f000" >Y</text><text x="1249" y="75.5" font-family="Liberation Sans, sans-serif" font-weight="bold" font-size="10.5" fill="#00f000" >X</text><text x="1216.5" y="86.2" font-family="Liberation Sans, sans-serif" font-weight="bold" font-size="11" fill="#00f000" >Z</text><path d="M1233.5 79 V66 M1230 69.5 L1233.5 65.5 L1237 69.5 M1233.5 79 H1250 M1246.5 75.5 L1250.5 79 L1246.5 82.5 M1233.5 79 L1227 85 M1226.5 80.5 L1226.5 85.5 L1231.5 85.5" fill="none" stroke="#00f000" stroke-width="1.7"/><g fill="none" stroke="#00f000" stroke-width="1.8" stroke-linejoin="round" stroke-dasharray="2 1.6"><rect x="1265.5" y="72.5" width="14" height="13" fill="none"/><path d="M1265.5 72.5 L1271.5 68.0 H1285.5 V81.0 L1279.5 85.5 M1279.5 72.5 L1285.5 68.0"/></g><text x="1289.5" y="74.6" font-family="Liberation Sans, sans-serif" font-weight="bold" font-size="10.5" fill="#00f000" >B</text><text x="1295" y="80" font-family="Liberation Sans, sans-serif" font-weight="bold" font-size="10.5" fill="#00f000" >o</text><text x="1299" y="86.6" font-family="Liberation Sans, sans-serif" font-weight="bold" font-size="10.5" fill="#00f000" >x</text><path d="M1314 66.5 H1323 V81 L1319.5 85.5 H1317.5 L1314 81 Z" fill="#00f000"/><text x="1325" y="74.2" font-family="Liberation Sans, sans-serif" font-weight="bold" font-size="10.5" fill="#00f000" textLength="28" lengthAdjust="spacingAndGlyphs">TOOL</text><g fill="none" stroke="#00f000" stroke-width="1.8" stroke-linejoin="round"><rect x="1369" y="70.5" width="16" height="13" fill="none"/><path d="M1369 70.5 L1375.5 65.5 H1391.5 V78.5 L1385 83.5 M1385 70.5 L1391.5 65.5"/></g><text x="1394" y="73.8" font-family="Liberation Sans, sans-serif" font-weight="bold" font-size="8.5" fill="#00f000" >OR</text><text x="1391" y="85.8" font-family="Liberation Sans, sans-serif" font-weight="bold" font-size="8.5" fill="#00f000" textLength="18" lengthAdjust="spacingAndGlyphs">THO</text><text x="1427" y="74" font-family="Liberation Sans, sans-serif" font-weight="bold" font-size="10.5" fill="#00f000" textLength="37" lengthAdjust="spacingAndGlyphs">Viewer</text><text x="1428.5" y="84.2" font-family="Liberation Sans, sans-serif" font-weight="bold" font-size="10.5" fill="#00f000" textLength="32.5" lengthAdjust="spacingAndGlyphs">Setup</text></svg>
<svg class="a" style="left:935px;top:94px" width="818" height="443" viewBox="935 94 818 443">
<g fill="none" stroke="#878787" stroke-width="1">
<polygon points="1139,124.5 1546.5,126 1533.5,514 1153,516.5"/>
<polygon points="1194,163.5 1489.5,164 1482.5,450.5 1201,451"/>
<path d="M1139 124.5 L1194 163.5 M1546.5 126 L1489.5 164 M1533.5 514 L1482.5 450.5 M1153 516.5 L1201 451"/>
</g>
<ellipse cx="1222.2" cy="444.7" rx="63.7" ry="61.8" fill="none" stroke="#18d018" stroke-width="1.1"/>
<ellipse cx="1356.8" cy="200.2" rx="5.1" ry="5.9" fill="#8a8a8a"/>
<g stroke="#eaea22" stroke-width="2.2" fill="#eaea22">
<path d="M1343 318 L1343 269" fill="none"/><polygon points="1343,259 1347.9,270.6 1338.1,270.6" stroke="none"/>
<path d="M1342.5 317.7 L1391 317.6" fill="none" stroke-width="2.6"/><polygon points="1403,317.5 1389.8,322.6 1389.8,312.4" stroke="none"/>
</g>
<circle cx="1343.5" cy="322" r="5.4" fill="#8a7c1c"/>
<circle cx="1342.6" cy="320.6" r="2.6" fill="#a89a2a" opacity=".7"/>
<g stroke="#eaea22" stroke-width="2" fill="none">
<path d="M1323.5 261.4 L1328.5 267.8 L1333.6 261.4 M1328.5 267.8 V275.8"/>
<path d="M1391.5 299.7 L1401.4 309.1 M1401.4 299.7 L1391.5 309.1"/>
</g>
</svg>
<div class="a" style="left:0px;top:1020px;width:1873px;height:3px;background:#fff"></div>
<div class="a" style="left:0px;top:1021px;width:34px;height:2px;background:#dcdcdc"></div>
<div class="a" style="left:1235px;top:1020px;width:638px;height:3px;background:#e4e4e4"></div>
</body></html>
